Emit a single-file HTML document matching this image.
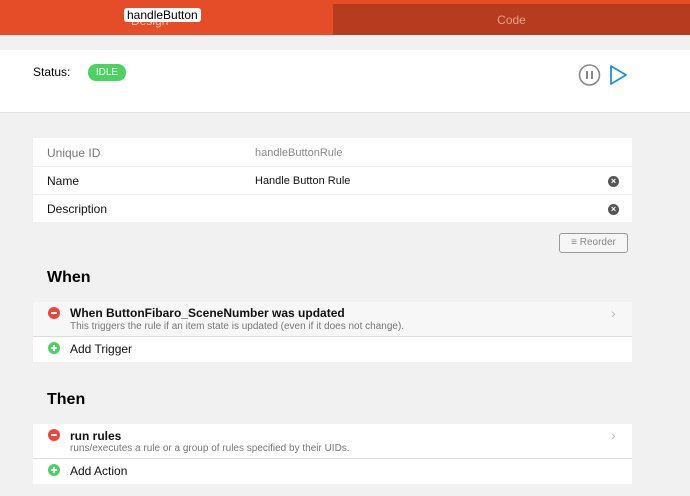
<!DOCTYPE html>
<html><head><style>
body{margin:0;width:690px;height:496px;background:#f1f1f1;font-family:"Liberation Sans",sans-serif;position:relative;overflow:hidden}
.a{position:absolute}
.card{position:absolute;left:33px;width:599px;background:#fff}
.row{position:absolute;left:0;width:599px;font-size:12px;color:#111}
.x{position:absolute;left:575px;width:11px;height:11px;border-radius:50%;background:#555;color:#fff;font-size:9px;line-height:11px;text-align:center;font-weight:bold}
.ic{position:absolute;left:15px;width:12px;height:12px;border-radius:50%}
.ic:after{content:"";position:absolute;left:3px;top:5px;width:6px;height:2px;background:#fff}
.plus:before{content:"";position:absolute;left:5px;top:3px;width:2px;height:6px;background:#fff}
.chev{position:absolute;left:578px;color:#bbb;font-size:14px}
</style></head><body>
<div class="a" style="left:0;top:0;width:690px;height:35px;background:#e44d27"></div>
<div class="a" style="left:333px;top:4px;width:357px;height:31px;background:#b73b1f;color:#e8a08c;font-size:12px;text-align:center;line-height:33px">Code</div>
<div class="a" style="left:131px;top:14px;color:#f3c1b0;font-size:12px">Design</div>
<div class="a" style="left:124px;top:8px;height:14px;padding:0 3px;background:#fff;border-radius:3px;font-size:12px;line-height:14px;color:#000">handleButton</div>
<div class="a" style="left:0;top:50px;width:690px;height:62px;background:#fff;border-bottom:1px solid #e4e4e4"></div>
<div class="a" style="left:33px;top:65px;font-size:12px">Status:</div>
<div class="a" style="left:88px;top:64px;width:38px;height:17px;border-radius:8px;background:#4cd263;color:#fff;font-size:10px;line-height:17px;text-align:center">IDLE</div>
<svg class="a" style="left:576px;top:62px" width="56" height="26"><circle cx="13.5" cy="13" r="10" fill="none" stroke="#888" stroke-width="1.6"/><rect x="10" y="9" width="2" height="8" fill="#888"/><rect x="15" y="9" width="2" height="8" fill="#888"/><path d="M35 4 L50 13 L35 22 Z" fill="none" stroke="#1e8df0" stroke-width="1.8" stroke-linejoin="round"/></svg>
<div class="card" style="top:138px;height:84px">
<div class="row" style="top:0;height:28px;border-bottom:1px solid #eee"><span class="a" style="left:14px;top:8px;color:#777">Unique ID</span><span class="a" style="left:222px;top:9px;color:#888;font-size:11px">handleButtonRule</span></div>
<div class="row" style="top:28px;height:28px;border-bottom:1px solid #eee"><span class="a" style="left:14px;top:8px">Name</span><span class="a" style="left:222px;top:9px;font-size:11px">Handle Button Rule</span><span class="x" style="top:10px">×</span></div>
<div class="row" style="top:56px;height:28px"><span class="a" style="left:14px;top:8px">Description</span><span class="x" style="top:10px">×</span></div>
</div>
<div class="a" style="left:559px;top:233px;width:67px;height:18px;border:1px solid #999;border-radius:3px;background:#f6f6f6;color:#888;font-size:10px;line-height:18px;text-align:center">≡ Reorder</div>
<div class="a" style="left:47px;top:269px;font-size:16px;font-weight:bold">When</div>
<div class="card" style="top:302px;height:60px">
<div class="row" style="top:0;height:34px;background:#f7f7f7;border-bottom:1px solid #ddd"><span class="ic" style="top:5px;background:#f0443a"></span><span class="a" style="left:37px;top:4px;font-weight:bold">When ButtonFibaro_SceneNumber was updated</span><span class="a" style="left:37px;top:19px;font-size:10px;color:#777">This triggers the rule if an item state is updated (even if it does not change).</span><span class="chev" style="top:3px">›</span></div>
<div class="row" style="top:35px;height:25px"><span class="ic plus" style="top:5px;background:#4cd263"></span><span class="a" style="left:37px;top:5px">Add Trigger</span></div>
</div>
<div class="a" style="left:47px;top:391px;font-size:16px;font-weight:bold">Then</div>
<div class="card" style="top:424px;height:60px">
<div class="row" style="top:0;height:34px;border-bottom:1px solid #ddd"><span class="ic" style="top:5px;background:#f0443a"></span><span class="a" style="left:37px;top:5px;font-weight:bold">run rules</span><span class="a" style="left:37px;top:19px;font-size:10px;color:#777">runs/executes a rule or a group of rules specified by their UIDs.</span><span class="chev" style="top:3px">›</span></div>
<div class="row" style="top:35px;height:25px"><span class="ic plus" style="top:5px;background:#4cd263"></span><span class="a" style="left:37px;top:5px">Add Action</span></div>
</div>
</body></html>
